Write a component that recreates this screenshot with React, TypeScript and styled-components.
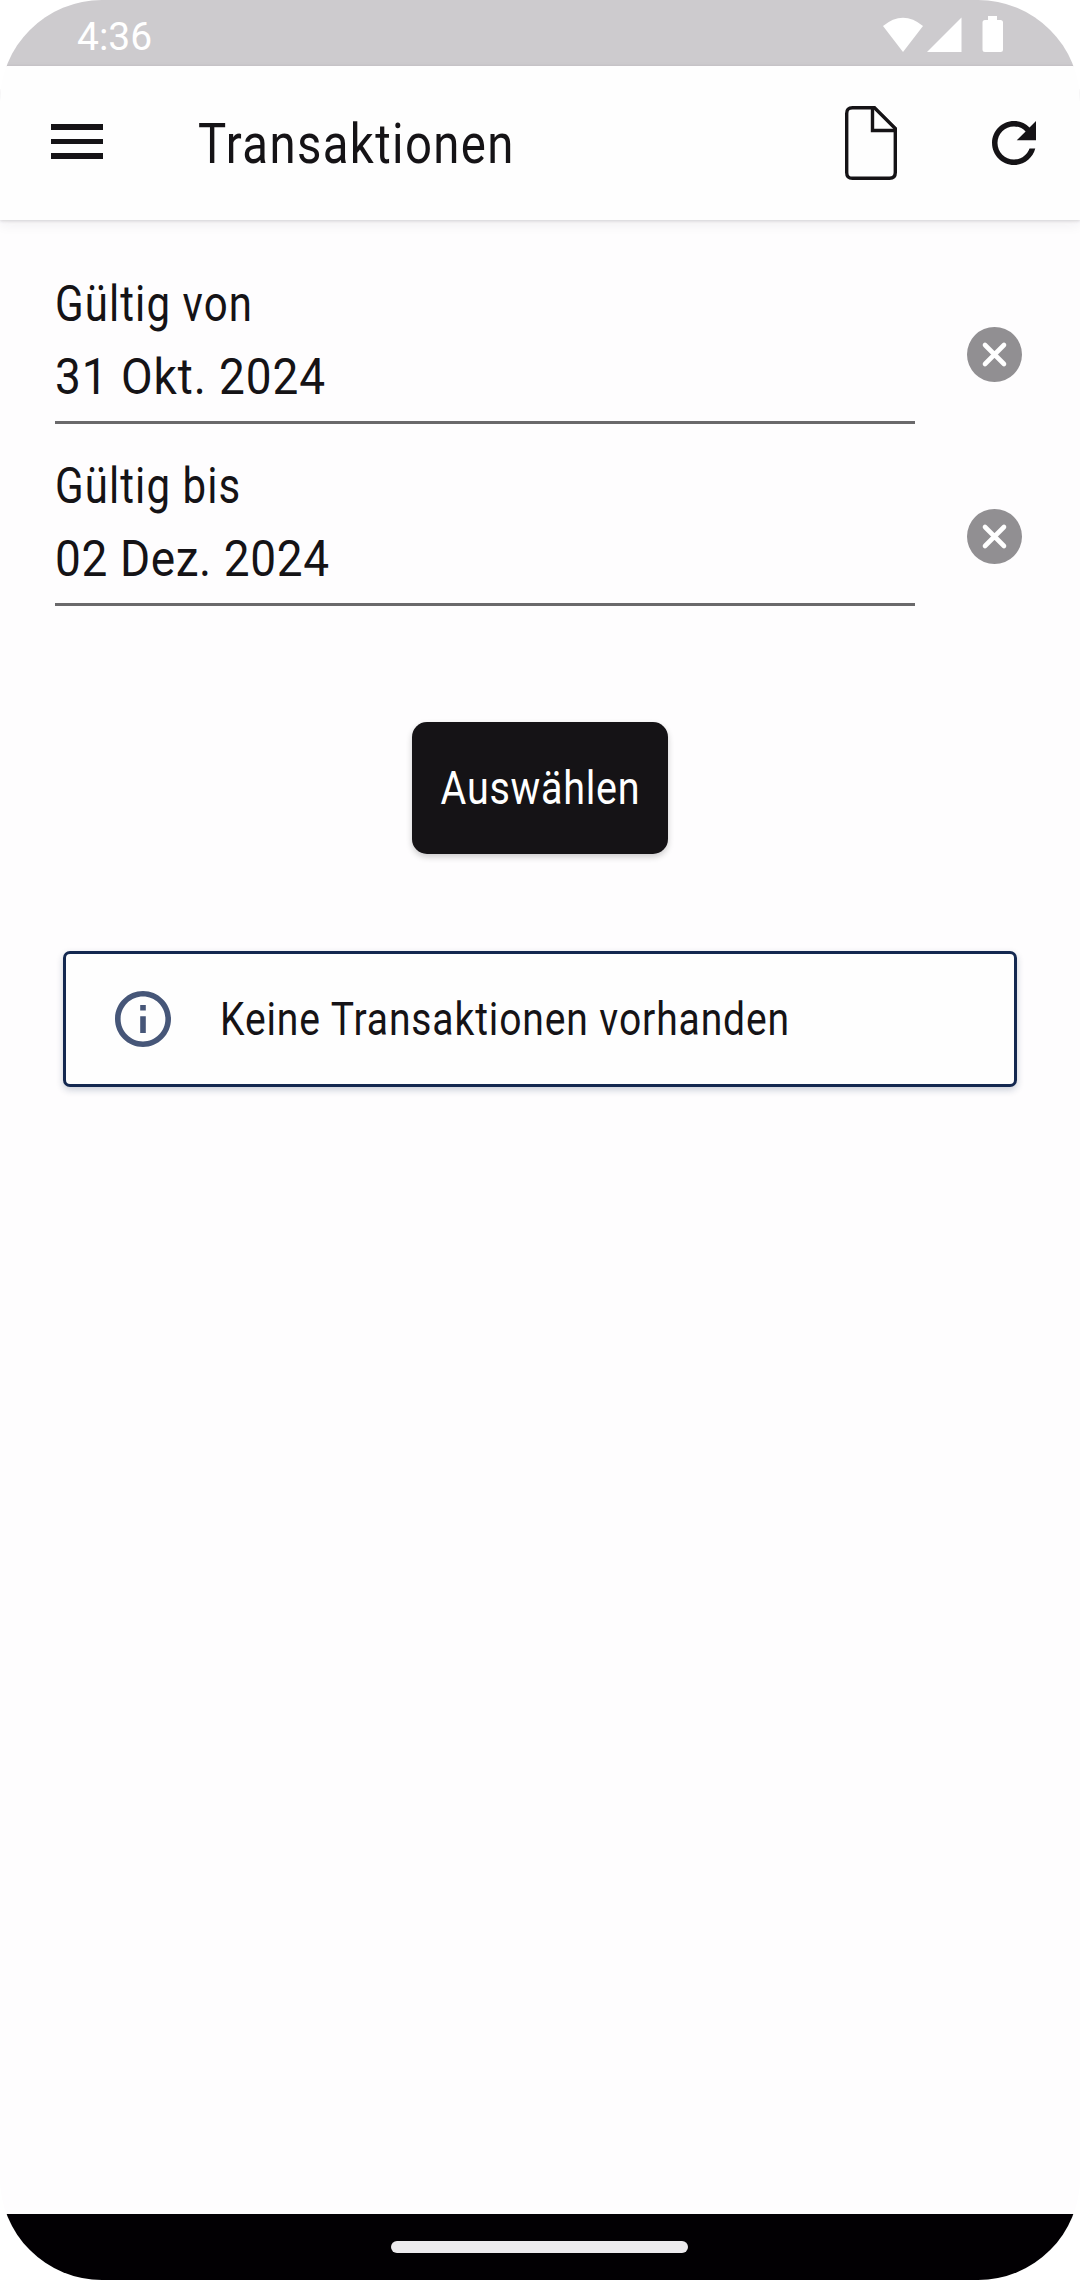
import React from "react";
import styled, { createGlobalStyle } from "styled-components";

const GlobalStyle = createGlobalStyle`
  *, *::before, *::after { box-sizing: border-box; }
  body { margin: 0; background: #ffffff; }
  button { border: 0; padding: 0; background: none; font: inherit; color: inherit; }
  svg { display: block; }
`;

const Screen = styled.div`
  display: flex;
  flex-direction: column;
  width: 1080px;
  height: 2280px;
  overflow: hidden;
  border-radius: 102px;
  background: #fefdfe;
  color: #151316;
  font-family: Roboto, "Liberation Sans", sans-serif;
`;

const StatusBar = styled.div`
  display: flex;
  flex: none;
  justify-content: space-between;
  height: 66px;
  padding: 0 76px 0 77px;
  background: #cdcbce;
  color: #ffffff;
`;

const Clock = styled.span`
  font-size: 39px;
  line-height: 74px;
`;

const StatusIcons = styled.div`
  display: flex;
  padding-top: 16px;
`;

const Toolbar = styled.header`
  display: flex;
  flex: none;
  align-items: center;
  height: 154px;
  padding: 0 33px 0 51px;
  background: #fefefe;
  box-shadow: 0 1px 3px rgba(40, 30, 45, 0.16), 0 5px 12px rgba(40, 30, 45, 0.06);
`;

const MenuButton = styled.button`
  display: flex;
  flex-direction: column;
  gap: 9px;
  width: 52px;
  margin-top: -3px;
`;

const MenuLine = styled.span`
  width: 52px;
  height: 5.5px;
  background: #151316;
`;

const Condensed = styled.span<{ $scale: number; $spacing: number; $origin?: string }>`
  display: inline-block;
  white-space: nowrap;
  letter-spacing: ${(p) => p.$spacing}px;
  transform: scaleX(${(p) => p.$scale});
  transform-origin: ${(p) => p.$origin ?? "left"};
`;

const Title = styled.h1`
  flex: 1;
  margin: 1px 0 0 95px;
  font-size: 55px;
  font-weight: 400;
  line-height: 66px;
`;

const DocumentButton = styled.button`
  width: 52px;
  margin-right: 84px;
`;

const RefreshButton = styled.button`
  width: 66px;
`;

const Content = styled.main`
  display: flex;
  flex: 1;
  flex-direction: column;
  padding: 48px 58px 0 55px;
`;

const FieldRow = styled.div`
  display: flex;
  align-items: flex-start;
  justify-content: space-between;
  height: 182px;
`;

const Field = styled.label`
  display: flex;
  flex-direction: column;
  width: 860px;
  height: 156px;
  border-bottom: 3px solid #6a696b;
  font-size: 50px;
  line-height: 73px;
`;

const ClearButton = styled.button`
  width: 55px;
  margin-top: 59px;
`;

const SelectButton = styled.button`
  display: flex;
  align-items: center;
  align-self: center;
  justify-content: center;
  width: 256px;
  height: 132px;
  margin: 90px 0 0 3px;
  border-radius: 15px;
  background: #151316;
  color: #ffffff;
  font-size: 46.5px;
  box-shadow: 0 3px 6px rgba(0, 0, 0, 0.2);
`;

const InfoCard = styled.section`
  display: flex;
  align-items: center;
  height: 136px;
  margin: 97px 5px 0 8px;
  padding-left: 49px;
  border: 3px solid #142850;
  border-radius: 7px;
  background: #fefefe;
  box-shadow: 0 3px 7px rgba(20, 40, 80, 0.22);
  font-size: 46.5px;
`;

const InfoText = styled.span`
  margin-left: 49px;
`;

const NavigationBar = styled.footer`
  display: flex;
  flex: none;
  align-items: center;
  justify-content: center;
  height: 66px;
  padding-right: 2px;
  background: #020003;
`;

const HomeHandle = styled.span`
  width: 297px;
  height: 12px;
  border-radius: 6px;
  background: #eceaed;
`;

const SystemIcons = () => (
  <svg width="122" height="36" viewBox="0 0 122 36" fill="#ffffff">
    <path d="M1 10Q21 -6.500 41 10L21 36Z" />
    <path d="M45 36L79.500 1.500V36Z" />
    <path d="M106 0h9v4h3.500q2.500 0 2.500 2.500v27q0 2.500-2.500 2.500h-15.500q-2.500 0-2.500-2.500v-27q0-2.500 2.500-2.500h3z" />
  </svg>
);

const DocumentIcon = () => (
  <svg width="52" height="74" viewBox="0 0 52 74" fill="none" stroke="#151316" strokeWidth="3.400">
    <path d="M7.500 1.700H29.500L50.300 22.500V66.500Q50.300 72.300 44.500 72.300H7.500Q1.700 72.300 1.700 66.500V7.500Q1.700 1.700 7.500 1.700Z" />
    <path d="M27.500 2V24.500H50" />
  </svg>
);

const RefreshIcon = () => (
  <svg width="66" height="66" viewBox="0 0 24 24" fill="#151316">
    <path d="M17.650 6.350C16.200 4.900 14.210 4 12 4c-4.420 0-7.990 3.580-7.990 8s3.570 8 7.990 8c3.730 0 6.840-2.550 7.730-6h-2.080c-.82 2.330-3.040 4-5.650 4-3.310 0-6-2.690-6-6s2.690-6 6-6c1.660 0 3.140.69 4.220 1.780L13 11h7V4l-2.350 2.350z" />
  </svg>
);

const ClearIcon = () => (
  <svg width="55" height="55" viewBox="0 0 55 55">
    <circle cx="27.500" cy="27.500" r="27.500" fill="#918f92" />
    <path d="M18 18L37 37M37 18L18 37" stroke="#ffffff" strokeWidth="4.600" strokeLinecap="round" />
  </svg>
);

const InfoIcon = () => (
  <svg width="56" height="56" viewBox="2 2 20 20" fill="#465678">
    <path d="M11 7h2v2h-2zm0 4h2v6h-2zm1-9C6.480 2 2 6.480 2 12s4.480 10 10 10 10-4.480 10-10S17.520 2 12 2zm0 18c-4.410 0-8-3.590-8-8s3.590-8 8-8 8 3.590 8 8-3.590 8-8 8z" />
  </svg>
);

const fields = [
  { label: "Gültig von", value: "31 Okt. 2024", valueSpacing: 1 },
  { label: "Gültig bis", value: "02 Dez. 2024", valueSpacing: 0.65 },
];

export default function App() {
  return (
    <>
      <GlobalStyle />
      <Screen>
        <StatusBar>
          <Clock>4:36</Clock>
          <StatusIcons>
            <SystemIcons />
          </StatusIcons>
        </StatusBar>
        <Toolbar>
          <MenuButton aria-label="Menü">
            <MenuLine />
            <MenuLine />
            <MenuLine />
          </MenuButton>
          <Title>
            <Condensed $scale={0.86} $spacing={1.6}>Transaktionen</Condensed>
          </Title>
          <DocumentButton aria-label="Dokument">
            <DocumentIcon />
          </DocumentButton>
          <RefreshButton aria-label="Aktualisieren">
            <RefreshIcon />
          </RefreshButton>
        </Toolbar>
        <Content>
          {fields.map((f) => (
            <FieldRow key={f.label}>
              <Field>
                <Condensed $scale={0.84} $spacing={1.3}>{f.label}</Condensed>
                <Condensed $scale={0.92} $spacing={f.valueSpacing}>{f.value}</Condensed>
              </Field>
              <ClearButton aria-label="Löschen">
                <ClearIcon />
              </ClearButton>
            </FieldRow>
          ))}
          <SelectButton>
            <Condensed $scale={0.85} $spacing={0.85} $origin="center">Auswählen</Condensed>
          </SelectButton>
          <InfoCard>
            <InfoIcon />
            <InfoText>
              <Condensed $scale={0.84} $spacing={1.04}>Keine Transaktionen vorhanden</Condensed>
            </InfoText>
          </InfoCard>
        </Content>
        <NavigationBar>
          <HomeHandle />
        </NavigationBar>
      </Screen>
    </>
  );
}
